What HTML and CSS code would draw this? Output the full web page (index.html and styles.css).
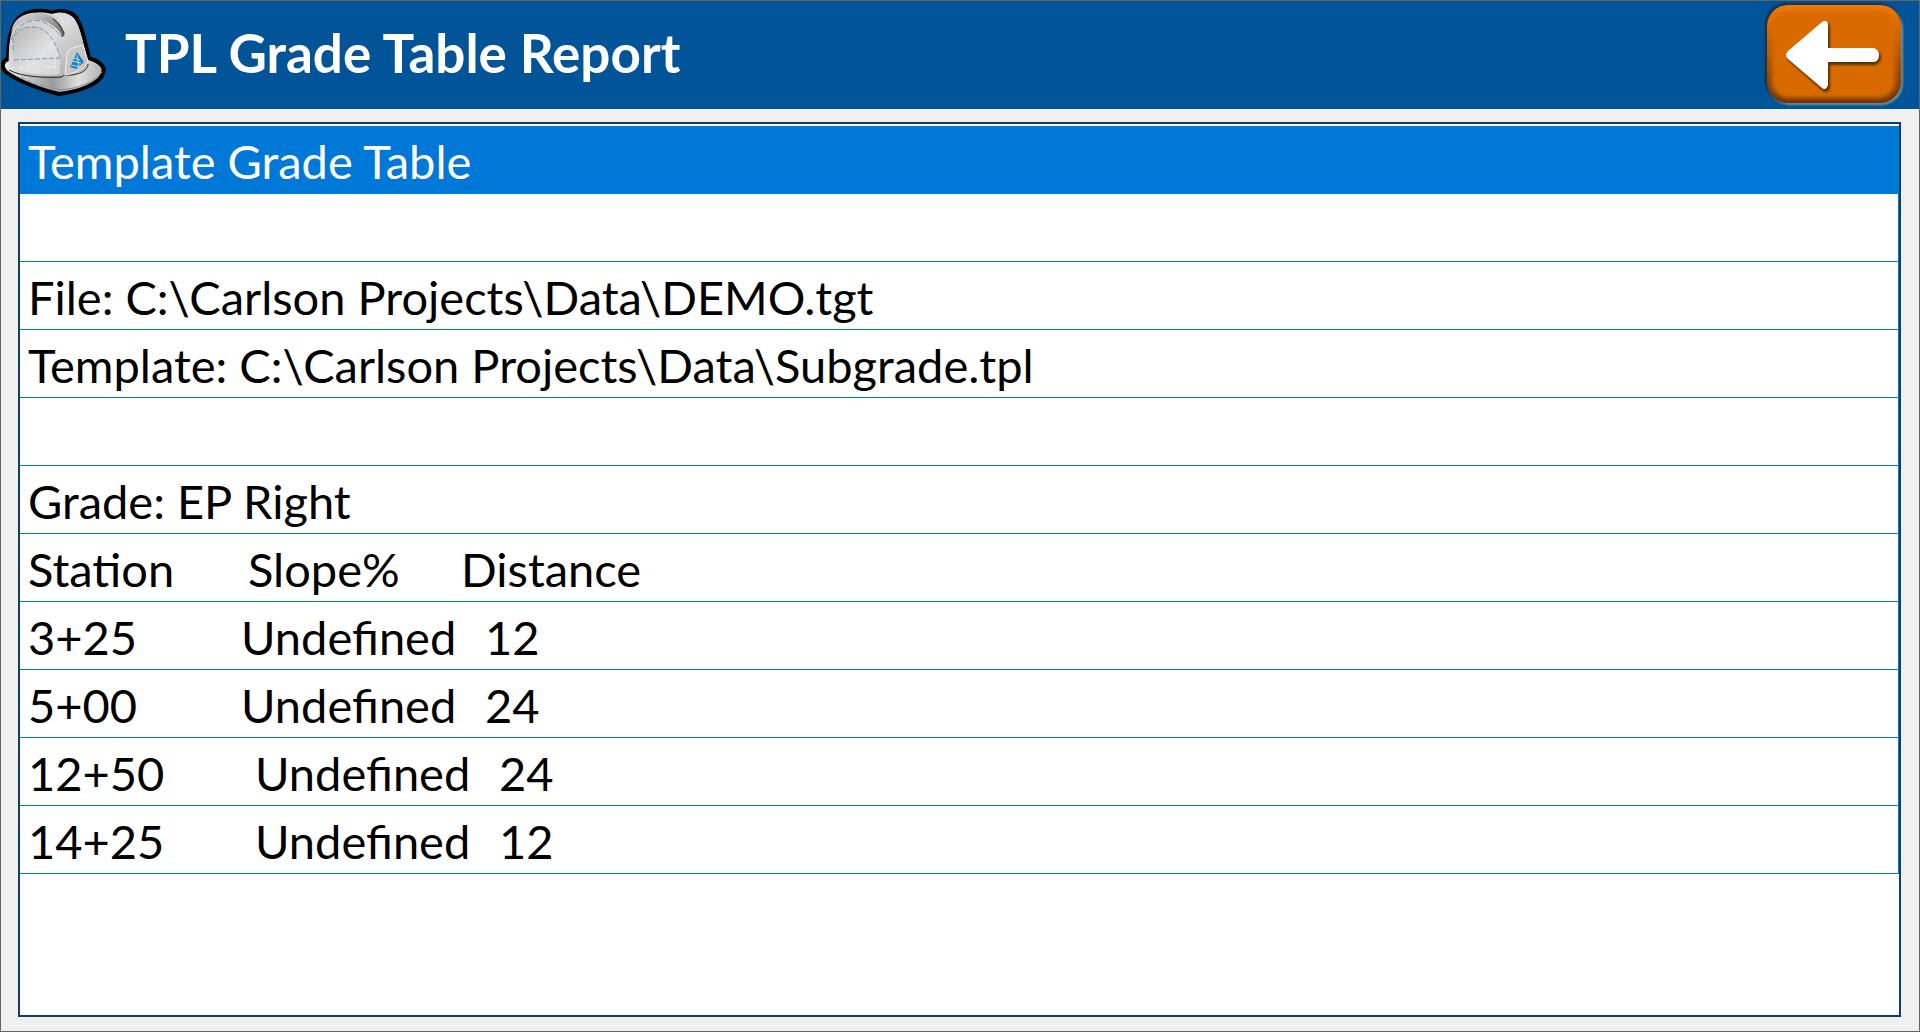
FILE: index.html
```html
<!DOCTYPE html>
<html lang="en">
<head>
<meta charset="utf-8">
<title>TPL Grade Table Report</title>
<link rel="stylesheet" href="styles.css">
</head>
<body>
<div class="window">
  <header class="titlebar">
    <svg class="logo" viewBox="0 0 106 108" aria-hidden="true">
      <defs>
        <linearGradient id="shell" x1="0" y1="0" x2="1" y2="1">
          <stop offset="0" stop-color="#c4c4c4"/>
          <stop offset=".45" stop-color="#dcdcdc"/>
          <stop offset="1" stop-color="#a4a4a4"/>
        </linearGradient>
        <linearGradient id="panel" x1="0" y1="0" x2="1" y2="1">
          <stop offset="0" stop-color="#b4b4b4"/>
          <stop offset=".6" stop-color="#e2e2e2"/>
          <stop offset="1" stop-color="#d2d2d2"/>
        </linearGradient>
        <linearGradient id="brim" x1="0" y1="0" x2="1" y2="0">
          <stop offset="0" stop-color="#f0f0f0"/>
          <stop offset=".5" stop-color="#9a9a9a"/>
          <stop offset=".75" stop-color="#e0e0e0"/>
          <stop offset="1" stop-color="#b0b0b0"/>
        </linearGradient>
        <linearGradient id="ridge" x1="0" y1="0" x2="1" y2="1">
          <stop offset="0" stop-color="#e6e6e6"/>
          <stop offset="1" stop-color="#666666"/>
        </linearGradient>
      </defs>
      <path d="M7 58C7 42 9 26 18 17C26 9 41 8 52 12C58 8 73 10 77 20C82 28 84 42 88 57C97 60 105 65 102 72C99 84 75 91 58 93C40 89 15 79 5 71C0 66 1 60 7 58Z" fill="url(#brim)" stroke="#000" stroke-width="4" stroke-linejoin="round"/>
      <path d="M8 67C7 44 9 27 18 18C27 11 41 10 52 13C59 10 70 11 75 21C81 33 83 46 87 62C86 69 76 74 62 75C40 77 18 74 8 67Z" fill="url(#shell)"/>
      <path d="M12 65V39C14 29 22 25 33 25C46 26 54 38 59 57V73C40 76 23 72 12 65Z" fill="url(#panel)"/>
      <path d="M10 31C16 21 30 15 43 20C54 24 59 30 61 35C64 35 63 28 58 22C51 13 41 11 30 12C18 14 12 21 10 31Z" fill="url(#ridge)"/>
      <path d="M52 18C57 21 60 26 63 32Q63 36 60 35" fill="none" stroke="#222" stroke-width="1"/>
      <path d="M10 39C15 25 28 17 39 20C51 24 56 31 60 35" fill="none" stroke="#7d92a5" stroke-width="1" stroke-dasharray="6 2"/>
      <path d="M12 49V39C14 29 22 26 33 26C46 27 54 39 59 56M13 59L59 57M20 76C32 83 49 87 59 88" fill="none" stroke="#8296a8" stroke-width="1" stroke-dasharray="5 2"/>
      <path d="M52 13Q60 14 63 22M20 65V73M54 60V67M43 66H56" fill="none" stroke="#eee" stroke-width="1"/>
      <path d="M8 69C21 76 43 77 61 76L63 74C77 75 87 70 87 63" fill="none" stroke="#222" stroke-width="1"/>
      <path d="M64 74L66 53Q67 48 72 47L82 44L87 60C85 67 76 72 64 74Z" fill="#c6c6c6" stroke="#f2f2f2" stroke-width="1"/>
      <path d="M76 51L83 61L75 68L69 66Z" fill="#1683c8"/>
      <path d="M73 57L79 59M71 60L80 62M70 64L79 66M76 54L78 66" stroke="#c8d6df" stroke-width="1" fill="none"/>
      <path d="M58 89C77 88 94 81 101 71" fill="none" stroke="#888" stroke-width="1"/>
    </svg>
    <h1 class="title">TPL Grade Table Report</h1>
    <button class="back" type="button" aria-label="Back">
      <svg viewBox="0 0 138 106" aria-hidden="true">
        <defs>
          <linearGradient id="bevel" x1="0" y1="0" x2="0" y2="1">
            <stop offset="0" stop-color="#f07a00"/>
            <stop offset=".5" stop-color="#b65700"/>
            <stop offset="1" stop-color="#6e3300"/>
          </linearGradient>
          <filter id="soft" x="-10%" y="-10%" width="120%" height="120%"><feGaussianBlur stdDeviation="2"/></filter>
          <filter id="edge" x="-10%" y="-10%" width="120%" height="120%"><feGaussianBlur stdDeviation="1"/></filter>
        </defs>
        <rect x="3" y="5" width="135" height="98" rx="22" fill="#7890a0" filter="url(#edge)"/>
        <rect x="0" y="1" width="135" height="99" rx="22" fill="#132f4a" filter="url(#edge)"/>
        <rect x="2" y="3" width="134" height="98" rx="21" fill="url(#bevel)"/>
        <rect x="7" y="9" width="123" height="87" rx="16" fill="#d86a00" filter="url(#soft)"/>
        <path d="M23 50L58 20Q63 17 64 23V46H109Q115 48 115 53Q115 59 109 61H64V84Q62 90 57 87L23 57Q20 53 23 50Z" fill="#5b3000" transform="translate(1 2)" filter="url(#edge)"/>
        <path d="M23 49L57 20Q62 17 63 22V46H109Q114 48 114 53Q114 59 109 60H63V83Q61 89 57 86L23 57Q19 53 23 49Z" fill="#fff"/>
      </svg>
    </button>
  </header>
  <main class="report">
    <table class="lines">
      <colgroup><col class="col-station"><col class="col-slope"><col></colgroup>
      <tbody>
        <tr class="selected"><td colspan="3">Template Grade Table</td></tr>
        <tr><td colspan="3"></td></tr>
        <tr><td colspan="3">File: C:\Carlson Projects\Data\DEMO.tgt</td></tr>
        <tr><td colspan="3">Template: C:\Carlson Projects\Data\Subgrade.tpl</td></tr>
        <tr><td colspan="3"></td></tr>
        <tr><td colspan="3">Grade: EP Right</td></tr>
        <tr class="heads"><th scope="col">Station</th><th scope="col">Slope%</th><th scope="col">Distance</th></tr>
        <tr class="data"><td>3+25</td><td>Undefined</td><td>12</td></tr>
        <tr class="data"><td>5+00</td><td>Undefined</td><td>24</td></tr>
        <tr class="data long"><td>12+50</td><td>Undefined</td><td>24</td></tr>
        <tr class="data long"><td>14+25</td><td>Undefined</td><td>12</td></tr>
      </tbody>
    </table>
  </main>
</div>
</body>
</html>
```
FILE: styles.css
```css
* { box-sizing: border-box; }

body {
  margin: 0;
  font-family: Lato, Carlito, sans-serif;
  color: #000;
}

.window {
  display: flex;
  flex-direction: column;
  min-height: 100vh;
  border: 1px solid #646464;
  background: #f0f0f0;
}

.titlebar {
  display: flex;
  align-items: center;
  height: 108px;
  padding-right: 16px;
  background: #005497;
}

.logo {
  width: 106px;
  height: 108px;
}

.title {
  flex: 1;
  margin: 0;
  padding: 0 0 4px 18px;
  font-size: 53px;
  line-height: 60px;
  font-weight: 700;
  color: #fff;
}

.back {
  width: 138px;
  height: 106px;
  padding: 0;
  border: 0;
  background: none;
}

.back svg {
  display: block;
  width: 100%;
  height: 100%;
  overflow: visible;
}

.report {
  flex: 1;
  margin: 13px 18px 14px 17px;
  padding-top: 2px;
  border: 2px solid #113c6c;
  background: #fff;
}

.lines {
  width: 100%;
  table-layout: fixed;
  border-collapse: separate;
  border-spacing: 0;
  border-right: 1px solid #0078d7;
  font-size: 47px;
  line-height: 56px;
}

.col-station { width: 221px; }
.col-slope { width: 220px; }

.lines td,
.lines th {
  height: 68px;
  padding: 2px 0 0;
  border-bottom: 1px solid #0078d7;
  font-weight: 400;
  text-align: left;
  white-space: nowrap;
}

.lines td:first-child,
.lines th:first-child { padding-left: 8px; }

.heads th:nth-child(2) { padding-left: 7px; }
.data td:nth-child(3) { padding-left: 24px; }
.long td:nth-child(2) { padding-left: 14px; }
.long td:nth-child(3) { padding-left: 38px; }

.selected {
  background: #0078d7;
  color: #fff;
}
```
